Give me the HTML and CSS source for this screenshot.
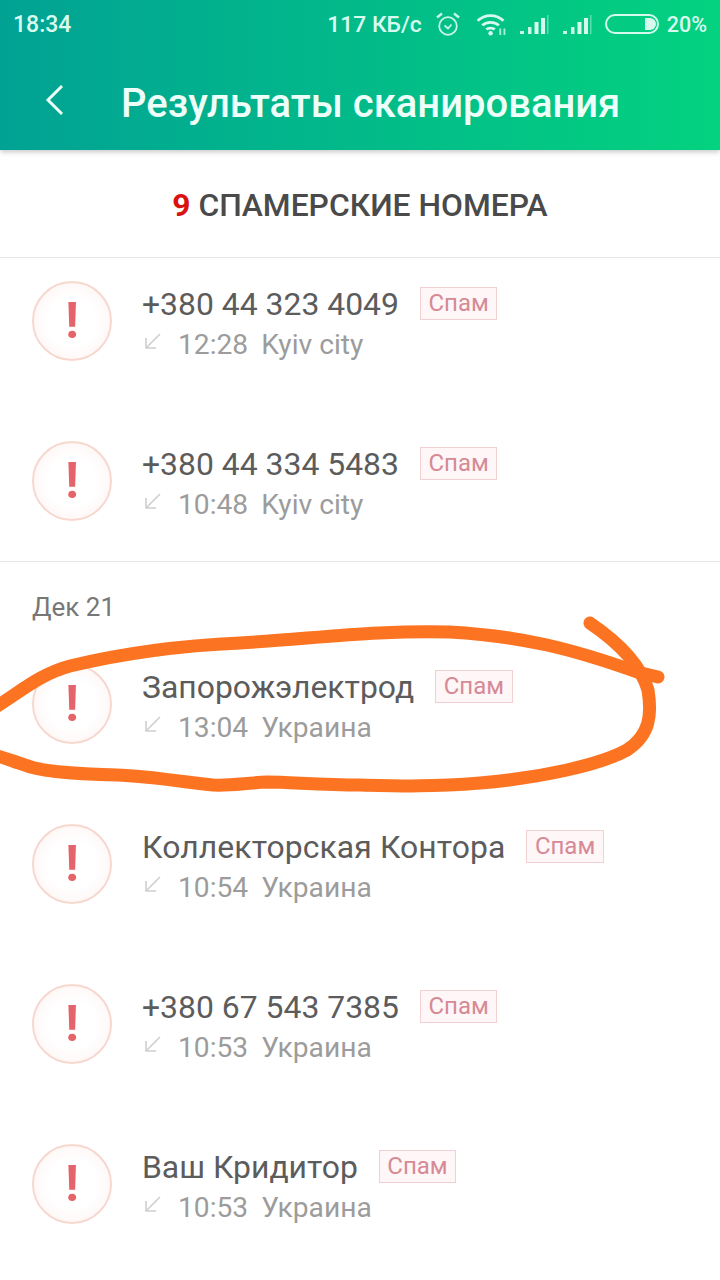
FILE: index.html
```html
<!DOCTYPE html>
<html lang="ru">
<head>
	<meta charset="utf-8">
	<title>Результаты сканирования</title>
	<link rel="stylesheet" href="styles.css">
</head>
<body>
	<div id="page">
		<div class="top">
			<div class="status">
				<span class="clock">18:34</span>
				<div class="status-right">
					<span class="speed">117 КБ/с</span>
					<svg class="ic-alarm" width="26" height="24" viewBox="0 0 26 24" fill="none" stroke="#c8f7e6">
						<circle cx="13" cy="14" r="8.8" stroke-width="1.8"/>
						<path d="M9.5 13.5l3.5 3 3.5-4" stroke-width="1.8"/>
						<path d="M2 5.5L7 1.5M24 5.5L19 1.5" stroke-width="2.4"/>
					</svg>
					<svg class="ic-wifi" width="31" height="24" viewBox="0 0 33 26" fill="none" stroke="#d6fbee" stroke-width="3">
						<path d="M1.5 9.5C9 2 22 2 29.5 9.5"/>
						<path d="M6.5 14.5C11 10 20 10 24.5 14.5"/>
						<path d="M11 19C13 17 18 17 20 19"/>
						<circle cx="15.5" cy="23" r="2.4" fill="#d6fbee" stroke="none"/>
						<path d="M26 18v7M30.5 18v7" stroke-width="2" stroke="#a8f0d4"/>
					</svg>
					<svg class="ic-signal" width="30" height="22" viewBox="0 0 30 22">
						<rect x="1" y="18" width="4" height="3" fill="#c8f7e6"/>
						<rect x="9" y="14" width="3.5" height="7" fill="#c8f7e6"/>
						<rect x="15.5" y="9" width="4" height="12" fill="#d6fbee"/>
						<rect x="22" y="5" width="4" height="16" fill="#d6fbee"/>
						<rect x="28" y="2" width="1.5" height="19" fill="#5ddcb0"/>
					</svg>
					<svg class="ic-signal" width="30" height="22" viewBox="0 0 30 22">
						<rect x="1" y="18" width="4" height="3" fill="#c8f7e6"/>
						<rect x="9" y="14" width="3.5" height="7" fill="#c8f7e6"/>
						<rect x="15.5" y="9" width="4" height="12" fill="#d6fbee"/>
						<rect x="22" y="5" width="4" height="16" fill="#d6fbee"/>
						<rect x="28" y="2" width="1.5" height="19" fill="#5ddcb0"/>
					</svg>
					<svg class="ic-batt" width="54" height="20" viewBox="0 0 54 20" fill="none">
						<rect x="1" y="1" width="52" height="18" rx="9" stroke="#d6fbee" stroke-width="2"/>
						<path d="M40 4h5a6 6 0 0 1 0 12h-5z" fill="#d6fbee"/>
					</svg>
					<span class="pct">20%</span>
				</div>
			</div>
			<div class="bar">
				<svg class="back" width="22" height="34" viewBox="0 0 22 34" fill="none" stroke="#eafff7" stroke-width="3">
					<path d="M18 3L4 17l14 14"/>
				</svg>
				<h1>Результаты сканирования</h1>
			</div>
		</div>

		<div class="count"><b>9</b> СПАМЕРСКИЕ НОМЕРА</div>

		<div class="list first">
			<div class="call">
				<div class="warn">!</div>
				<div class="info">
					<div class="line"><span class="name">+380 44 323 4049</span><span class="tag">Спам</span></div>
					<div class="sub"><svg class="arrow" width="18" height="18" viewBox="0 0 18 18" fill="none" stroke="#cfcfcf" stroke-width="1.6"><path d="M16 2L2 16M2 6v10h10"/></svg><span>12:28</span><span>Kyiv city</span></div>
				</div>
			</div>
			<div class="call">
				<div class="warn">!</div>
				<div class="info">
					<div class="line"><span class="name">+380 44 334 5483</span><span class="tag">Спам</span></div>
					<div class="sub"><svg class="arrow" width="18" height="18" viewBox="0 0 18 18" fill="none" stroke="#cfcfcf" stroke-width="1.6"><path d="M16 2L2 16M2 6v10h10"/></svg><span>10:48</span><span>Kyiv city</span></div>
				</div>
			</div>
		</div>

		<div class="day">Дек 21</div>

		<div class="list">
			<div class="call">
				<div class="warn">!</div>
				<div class="info">
					<div class="line"><span class="name">Запорожэлектрод</span><span class="tag">Спам</span></div>
					<div class="sub"><svg class="arrow" width="18" height="18" viewBox="0 0 18 18" fill="none" stroke="#cfcfcf" stroke-width="1.6"><path d="M16 2L2 16M2 6v10h10"/></svg><span>13:04</span><span>Украина</span></div>
				</div>
			</div>
			<div class="call">
				<div class="warn">!</div>
				<div class="info">
					<div class="line"><span class="name wide">Коллекторская Контора</span><span class="tag">Спам</span></div>
					<div class="sub"><svg class="arrow" width="18" height="18" viewBox="0 0 18 18" fill="none" stroke="#cfcfcf" stroke-width="1.6"><path d="M16 2L2 16M2 6v10h10"/></svg><span>10:54</span><span>Украина</span></div>
				</div>
			</div>
			<div class="call">
				<div class="warn">!</div>
				<div class="info">
					<div class="line"><span class="name">+380 67 543 7385</span><span class="tag">Спам</span></div>
					<div class="sub"><svg class="arrow" width="18" height="18" viewBox="0 0 18 18" fill="none" stroke="#cfcfcf" stroke-width="1.6"><path d="M16 2L2 16M2 6v10h10"/></svg><span>10:53</span><span>Украина</span></div>
				</div>
			</div>
			<div class="call">
				<div class="warn">!</div>
				<div class="info">
					<div class="line"><span class="name">Ваш Кридитор</span><span class="tag">Спам</span></div>
					<div class="sub"><svg class="arrow" width="18" height="18" viewBox="0 0 18 18" fill="none" stroke="#cfcfcf" stroke-width="1.6"><path d="M16 2L2 16M2 6v10h10"/></svg><span>10:53</span><span>Украина</span></div>
				</div>
			</div>
		</div>

		<!-- hand drawn marker on top of the screenshot -->
		<svg class="scribble" width="720" height="1280" viewBox="0 0 720 1280" fill="none" stroke="#fc7422" stroke-width="13" stroke-linecap="round" stroke-linejoin="round">
			<path d="M-6 708C20 692 40 674 70 666C120 654 170 646 240 643C320 638 380 630 450 632C520 636 570 648 637 672L658 677"/>
			<path d="M590 623C615 640 640 662 648 690C652 715 650 735 627 750C600 765 540 778 480 783C430 787 400 786 360 785C320 785 290 782 267 782C245 783 230 786 213 785C190 783 150 776 117 775C80 774 40 772 25 765C15 762 5 758 -6 755"/>
		</svg>
	</div>
</body>
</html>
```

FILE: styles.css
```css
html, body {
	margin: 0;
	padding: 0;
	background: #fff;
}
#page {
	position: relative;
	width: 720px;
	height: 1280px;
	overflow: hidden;
	font-family: Roboto, "Liberation Sans", sans-serif;
	background: #fff;
}

.top {
	height: 150px;
	background: linear-gradient(90deg, #01a294, #03d27f);
	box-shadow: 0 2px 5px rgba(0,0,0,0.22);
	color: #d9fbef;
}
.status {
	display: flex;
	justify-content: space-between;
	align-items: center;
	height: 48px;
	padding: 0 13px;
	font-size: 23px;
	font-weight: 500;
}
.status-right {
	display: flex;
	align-items: center;
}
.speed { margin-right: 13px; font-size: 22.8px; }
.ic-alarm { margin-right: 15px; }
.ic-wifi { margin-right: 12px; }
.ic-signal { margin-right: 13px; }
.ic-batt { margin-right: 8px; }
.pct { font-size: 21.5px; }
.bar {
	display: flex;
	align-items: center;
	height: 104px;
	padding-left: 44px;
}
.back { margin-right: 55px; }
h1 {
	margin: 0;
	padding-top: 6px;
	font-size: 40px;
	font-weight: 500;
	color: #edfff8;
}

.count {
	height: 107px;
	line-height: 110px;
	text-align: center;
	font-size: 31.8px;
	font-weight: 500;
	color: #4a4a4a;
	border-bottom: 1px solid #e6e6e6;
}
.count b {
	color: #d9120f;
	font-weight: 700;
}

.list {
	display: flex;
	flex-direction: column;
	gap: 80px;
	padding: 0 32px;
}
.list.first {
	padding-top: 23px;
	padding-bottom: 40px;
	border-bottom: 1px solid #e6e6e6;
}
.day {
	height: 102px;
	padding: 28px 0 0 32px;
	box-sizing: border-box;
	font-size: 26px;
	line-height: 34px;
	color: #777;
}

.call {
	display: flex;
	height: 80px;
}
.warn {
	width: 76px;
	height: 76px;
	margin-right: 30px;
	border: 2px solid #f7d8cf;
	border-radius: 50%;
	background: radial-gradient(circle, #fff 45%, #fdf1ee 100%);
	color: #e5636a;
	font-size: 50px;
	font-weight: 700;
	line-height: 76px;
	text-align: center;
}
.line {
	display: flex;
	align-items: center;
	height: 46px;
}
.name {
	font-size: 31.9px;
	color: #5c5c5c;
}
.name.wide {
	letter-spacing: 0.1px;
}
.tag {
	margin: 0 0 2px 21px;
	padding: 0 7.5px;
	height: 31px;
	line-height: 31px;
	border: 1px solid #f2cfd3;
	background: #fff6f7;
	color: #d58a96;
	font-size: 24px;
}
.sub {
	display: flex;
	align-items: center;
	height: 34px;
	font-size: 28.2px;
	color: #9c9c9c;
}
.arrow {
	margin: 0 16px 6px 2px;
}
.sub span + span { margin-left: 13px; }

.scribble {
	position: absolute;
	left: 0;
	top: 0;
}
```
